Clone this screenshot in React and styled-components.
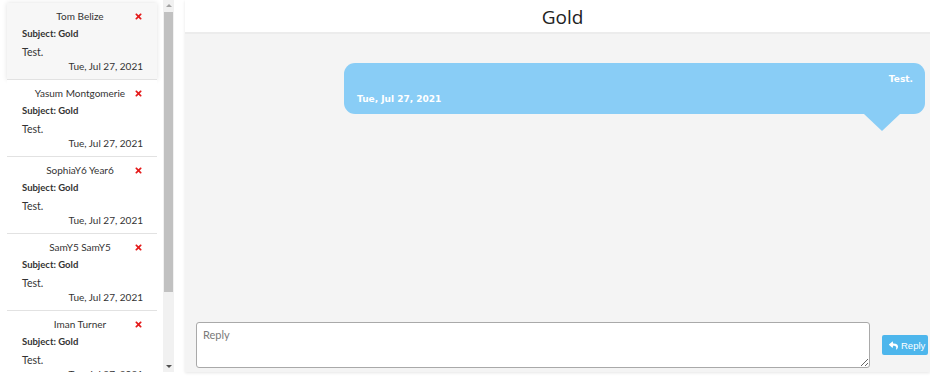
import styled, { createGlobalStyle } from "styled-components";
import { FaReply, FaTimes } from "react-icons/fa";

const GlobalStyle = createGlobalStyle`
  html, body {
    margin: 0;
    padding: 0;
    background: #ffffff;
  }
  body {
    font-family: Lato, "Noto Sans", sans-serif;
    color: #333333;
  }
`;

const Page = styled.div`
  display: flex;
  flex-direction: row;
  width: 930px;
  height: 379px;
  overflow: hidden;
`;

const Sidebar = styled.div`
  width: 174px;
  height: 372px;
  flex-shrink: 0;
  display: flex;
  flex-direction: row;
`;

const List = styled.div`
  flex: 1;
  overflow: hidden;
  padding-top: 3px;
`;

const ScrollTrack = styled.div`
  width: 11px;
  background: #f1f1f1;
  display: flex;
  flex-direction: column;
  align-items: center;
`;

const Arrow = styled.div`
  height: 11px;
  width: 11px;
  display: flex;
  align-items: center;
  justify-content: center;
  margin-top: ${(p) => (p.$down ? "auto" : "0")};

  &::before {
    content: "";
    border-left: 3px solid transparent;
    border-right: 3px solid transparent;
    ${(p) =>
      p.$down
        ? "border-top: 3px solid #505050;"
        : "border-bottom: 3px solid #a3a3a3;"}
  }
`;

const Thumb = styled.div`
  width: 9px;
  height: 280px;
  margin-top: 1px;
  background: #c1c1c1;
`;

const Item = styled.div`
  margin-left: 7px;
  width: 150px;
  height: 77px;
  box-sizing: border-box;
  padding: 5px 14px 0 15px;
  border-bottom: 1px solid #e2e2e2;
  background: ${(p) => (p.$active ? "#f7f7f7" : "#ffffff")};
  box-shadow: ${(p) => (p.$active ? "0 0 5px rgba(0, 0, 0, 0.12)" : "none")};
`;

const NameRow = styled.div`
  display: flex;
  align-items: center;
  justify-content: space-between;
  font-size: 10px;
  line-height: 16px;
  color: #333;
`;

const Name = styled.span`
  flex: 1;
  text-align: center;
  white-space: nowrap;
  padding-left: 8px;
`;

const Remove = styled.span`
  color: #e41a1a;
  display: flex;
  font-size: 9px;
  margin-left: 4px;
`;

const Subject = styled.div`
  font-size: 9.5px;
  font-weight: 700;
  margin-top: 3px;
  line-height: 14px;
`;

const Body = styled.div`
  font-size: 10.5px;
  margin-top: 4px;
  line-height: 14px;
`;

const Stamp = styled.div`
  font-size: 10px;
  text-align: right;
  margin-top: 0;
  line-height: 14px;
`;

const Main = styled.div`
  flex: 1;
  margin-left: 11px;
  height: 372px;
  display: flex;
  flex-direction: column;
  box-shadow: 0 1px 3px rgba(0, 0, 0, 0.1);
  background: #f4f4f4;
`;

const Header = styled.div`
  height: 34px;
  flex-shrink: 0;
  background: #ffffff;
  border-bottom: 2px solid #ececec;
  box-sizing: border-box;
  display: flex;
  align-items: center;
  justify-content: center;
  padding: 2px 0 0 10px;
  font-family: "Open Sans", "Liberation Sans", sans-serif;
  font-size: 19px;
  color: #222;
`;

const Thread = styled.div`
  flex: 1;
  padding: 29px 5px 0 0;
  display: flex;
  flex-direction: column;
  align-items: flex-end;
`;

const Bubble = styled.div`
  position: relative;
  width: 581px;
  height: 51px;
  box-sizing: border-box;
  padding: 10px 12px 0 13px;
  border-radius: 11px;
  background: #89cdf6;
  color: #ffffff;
  font-family: "DejaVu Sans", Verdana, sans-serif;
  font-weight: 700;
  font-size: 9px;

  &::after {
    content: "";
    position: absolute;
    top: 100%;
    right: 25px;
    border-left: 18px solid transparent;
    border-right: 18px solid transparent;
    border-top: 17px solid #89cdf6;
  }
`;

const BubbleText = styled.div`
  text-align: right;
  line-height: 12px;
`;

const BubbleDate = styled.div`
  margin-top: 8px;
  line-height: 12px;
`;

const Composer = styled.div`
  display: flex;
  align-items: center;
  padding: 0 2px 4px 11px;
  gap: 12px;
`;

const Input = styled.textarea`
  width: 674px;
  height: 46px;
  box-sizing: border-box;
  border: 1px solid #a9a9a9;
  border-radius: 3px;
  padding: 5px 6px;
  font-family: Lato, "Noto Sans", sans-serif;
  font-size: 11px;
  color: #333;
  background: #fff;
  resize: vertical;
  outline: none;

  &::placeholder {
    color: #7a7a7a;
  }
`;

const ReplyButton = styled.button`
  display: flex;
  align-items: center;
  gap: 3px;
  width: 46px;
  height: 20px;
  padding: 0 0 0 7px;
  border: none;
  border-radius: 2px;
  background: #4db6ec;
  color: #ffffff;
  font-family: "Liberation Sans", Arial, sans-serif;
  font-size: 9.5px;
`;

const messages = [
  "Tom Belize",
  "Yasum Montgomerie",
  "SophiaY6 Year6",
  "SamY5 SamY5",
  "Iman Turner",
  "Lucy Harper",
];

export default function App() {
  return (
    <>
      <GlobalStyle />
      <Page>
        <Sidebar>
          <List>
            {messages.map((name, i) => (
              <Item key={name} $active={i === 0}>
                <NameRow>
                  <Name>{name}</Name>
                  <Remove>
                    <FaTimes />
                  </Remove>
                </NameRow>
                <Subject>Subject: Gold</Subject>
                <Body>Test.</Body>
                <Stamp>Tue, Jul 27, 2021</Stamp>
              </Item>
            ))}
          </List>
          <ScrollTrack>
            <Arrow />
            <Thumb />
            <Arrow $down />
          </ScrollTrack>
        </Sidebar>
        <Main>
          <Header>Gold</Header>
          <Thread>
            <Bubble>
              <BubbleText>Test.</BubbleText>
              <BubbleDate>Tue, Jul 27, 2021</BubbleDate>
            </Bubble>
          </Thread>
          <Composer>
            <Input placeholder="Reply" />
            <ReplyButton>
              <FaReply size={9} />
              Reply
            </ReplyButton>
          </Composer>
        </Main>
      </Page>
    </>
  );
}
